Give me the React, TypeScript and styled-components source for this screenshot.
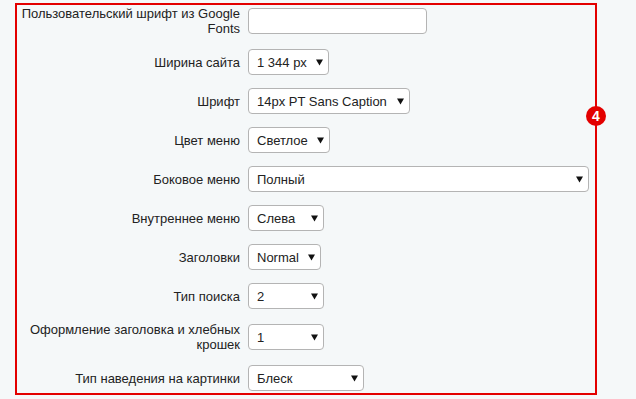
import React from "react"
import styled, { createGlobalStyle } from "styled-components"

const GlobalStyle = createGlobalStyle`
  html, body {
    margin: 0;
    padding: 0;
    background: #f5f8f9;
  }
  body {
    font-family: "Liberation Sans", Arial, sans-serif;
    font-size: 13px;
    color: #222;
  }
`

const Page = styled.div`
  padding: 3px 0 0 15px;
  width: 582px;
`

const Frame = styled.div`
  position: relative;
  border: 2px solid #e30000;
  height: 388px;
  box-sizing: content-box;
`

const Form = styled.div`
  display: flex;
  flex-direction: column;
  gap: 13px;
  padding-top: 1px;
`

const Row = styled.div`
  display: flex;
  align-items: center;
  gap: 8px;
`

const Label = styled.label`
  width: 223px;
  flex: none;
  text-align: right;
  line-height: 15px;
`

const TextInput = styled.input`
  box-sizing: border-box;
  width: 179px;
  height: 26px;
  border: 1px solid #b4b4b4;
  border-radius: 4px;
  background: #fff;
  padding: 0 8px;
  font: inherit;
  outline: none;
`

const SelectWrap = styled.div<{ $width: number }>`
  position: relative;
  width: ${p => p.$width}px;
  height: 26px;
  flex: none;
`

const NativeSelect = styled.select`
  appearance: none;
  -webkit-appearance: none;
  box-sizing: border-box;
  width: 100%;
  height: 100%;
  border: 1px solid #b4b4b4;
  border-radius: 4px;
  background: #fff;
  padding: 0 20px 0 8px;
  font: inherit;
  color: #222;
  outline: none;
`

const Arrow = styled.svg`
  position: absolute;
  right: 6px;
  top: 10px;
  pointer-events: none;
`

const Badge = styled.div`
  position: absolute;
  right: -11px;
  top: 101px;
  width: 20px;
  height: 20px;
  border-radius: 50%;
  background: #e30000;
  color: #fff;
  font-weight: bold;
  font-size: 14px;
  line-height: 20px;
  text-align: center;
`

function Select({ value, width }: { value: string; width: number }) {
  return (
    <SelectWrap $width={width}>
      <NativeSelect defaultValue={value}>
        <option>{value}</option>
      </NativeSelect>
      <Arrow width="7" height="7" viewBox="0 0 7 7">
        <path d="M0 0.5 H7 L3.5 6.5 Z" fill="#111" />
      </Arrow>
    </SelectWrap>
  )
}

const fields: { label: string; value: string; width: number }[] = [
  { label: "Ширина сайта", value: "1 344 px", width: 81 },
  { label: "Шрифт", value: "14px PT Sans Caption", width: 162 },
  { label: "Цвет меню", value: "Светлое", width: 82 },
  { label: "Боковое меню", value: "Полный", width: 341 },
  { label: "Внутреннее меню", value: "Слева", width: 76 },
  { label: "Заголовки", value: "Normal", width: 73 },
  { label: "Тип поиска", value: "2", width: 76 },
  { label: "Оформление заголовка и хлебных крошек", value: "1", width: 76 },
  { label: "Тип наведения на картинки", value: "Блеск", width: 116 },
]

export default function App() {
  return (
    <>
      <GlobalStyle />
      <Page>
        <Frame>
          <Form>
            <Row>
              <Label>Пользовательский шрифт из Google Fonts</Label>
              <TextInput type="text" />
            </Row>
            {fields.map(f => (
              <Row key={f.label}>
                <Label>{f.label}</Label>
                <Select value={f.value} width={f.width} />
              </Row>
            ))}
          </Form>
          <Badge>4</Badge>
        </Frame>
      </Page>
    </>
  )
}
